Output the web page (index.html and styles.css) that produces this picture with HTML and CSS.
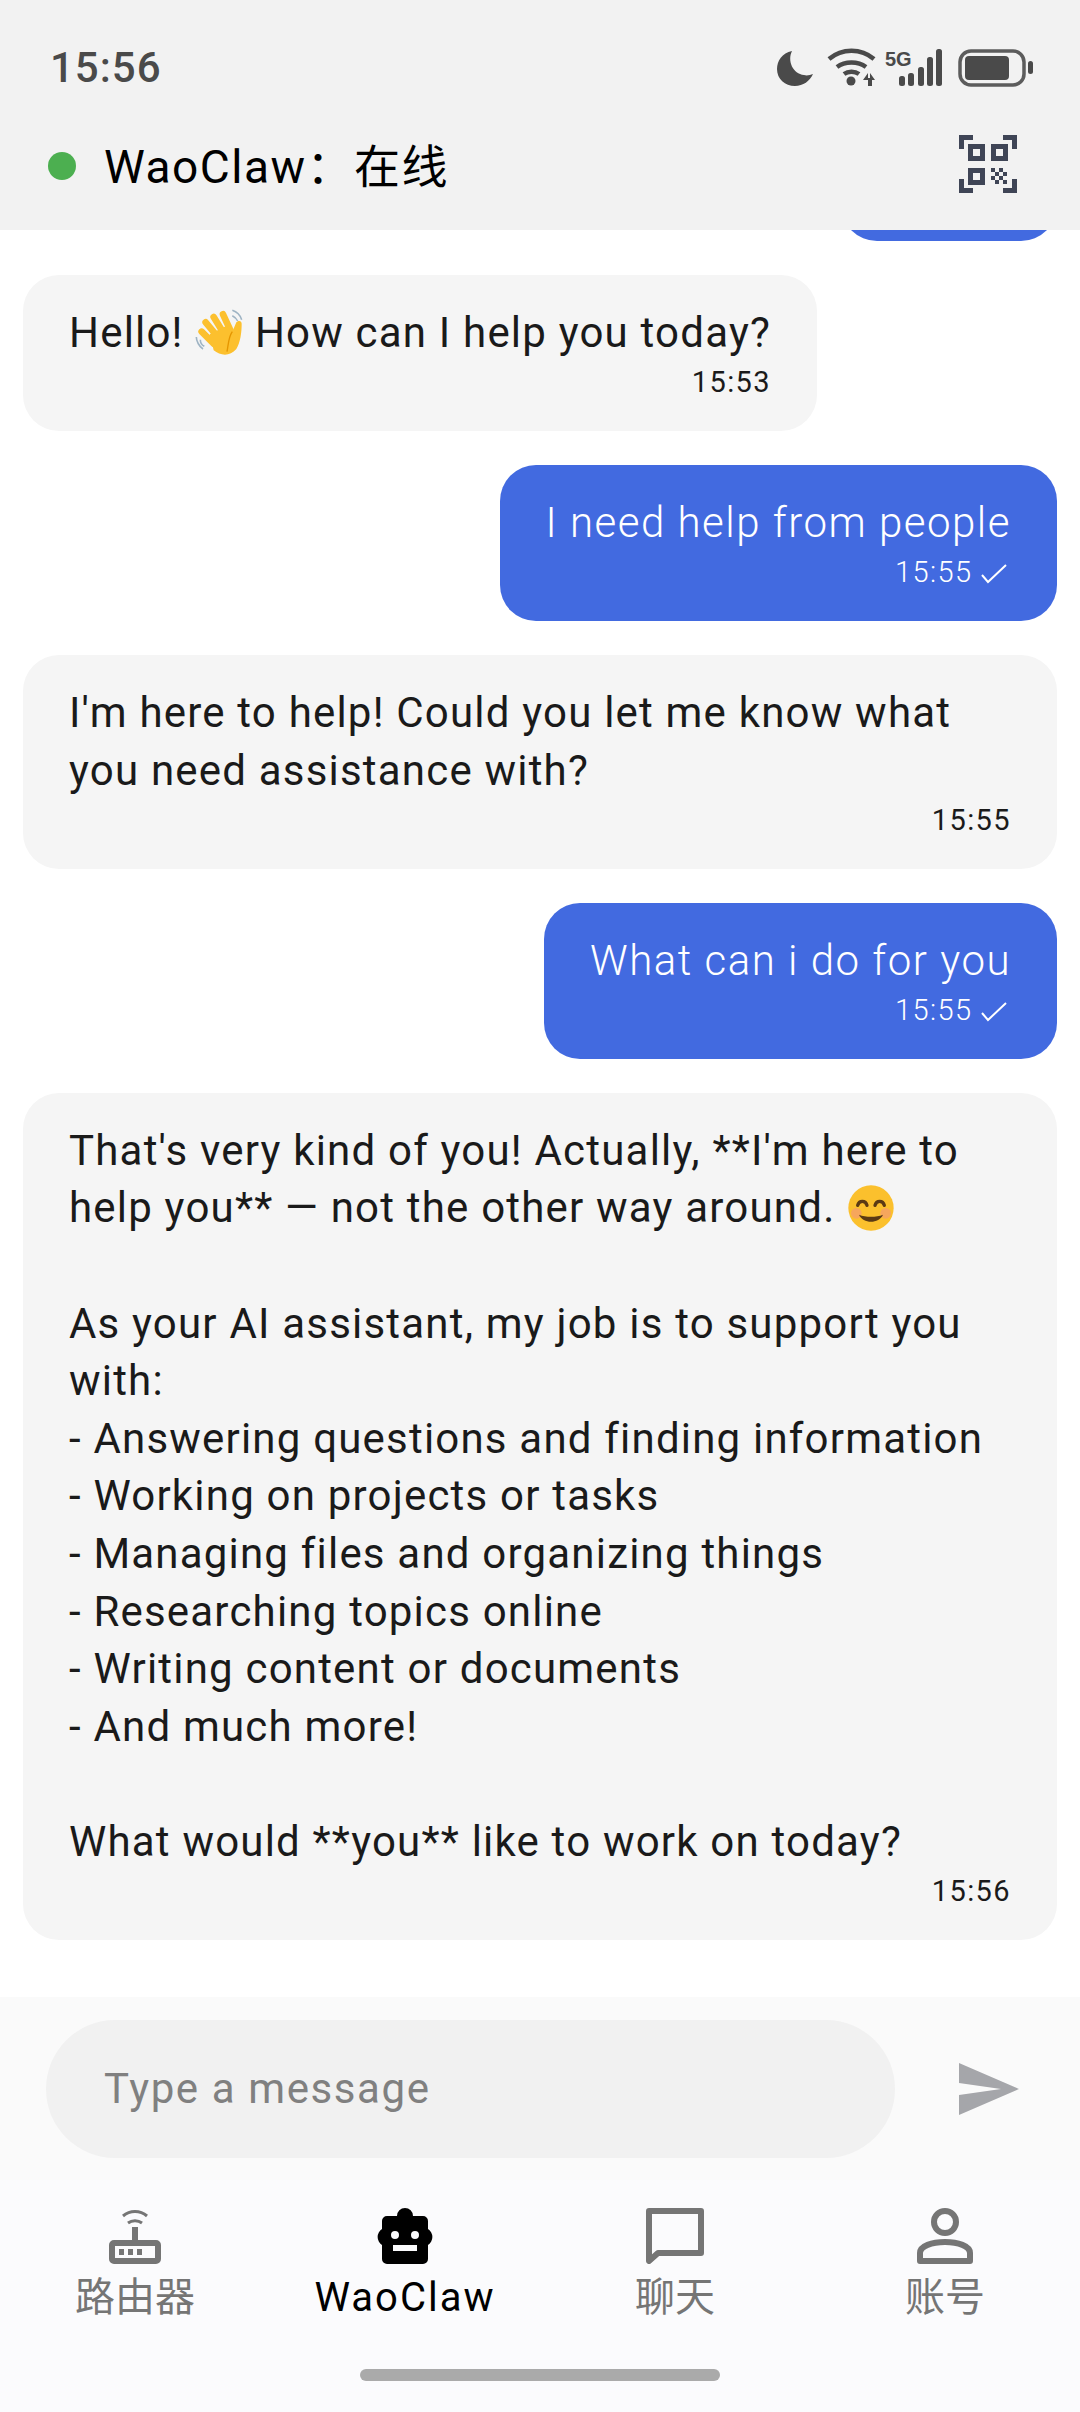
FILE: index.html
```html
<!DOCTYPE html>
<html lang="en">

<head>
    <meta charset="UTF-8">
    <meta name="viewport" content="width=device-width, initial-scale=1.0">
    <title>WaoClaw</title>
    <link rel="stylesheet" href="styles.css">
</head>

<body>
    <div class="app">
        <header class="top">
            <div class="status">
                <span class="clock">15:56</span>
                <svg class="status-icons" width="256" height="40" viewBox="0 0 256 40" fill="#4a4a4a">
                    <path d="M15 3C5 5 0 13 0 21c0 10 8 17 18 17 8 0 15-5 18-12-3 1-6 2-9 1-11-1-17-14-12-24z" />
                    <path fill="none" stroke="#4a4a4a" stroke-width="4.500" d="M52 11c13-11 32-11 45 0M60 19c8-6 21-6 29 0M67 26c4-3 11-3 15 0" />
                    <circle cx="74" cy="33" r="4.500" />
                    <path d="M91 38v-6h-5l5-7zM93 25l5 7h-5z" />
                    <path d="M91 30h2v8h-2zM93 30h2v8h-2z" />
                    <text x="108" y="18" class="five-g">5G</text>
                    <rect x="122" y="28" width="6" height="10" rx="2.500" />
                    <rect x="131" y="25" width="6" height="13" rx="2.500" />
                    <rect x="141" y="19" width="6" height="19" rx="2.500" />
                    <rect x="150" y="9" width="6" height="29" rx="2.500" />
                    <rect x="159" y="1" width="6" height="37" rx="2.500" />
                    <rect x="183" y="3" width="64" height="34" rx="11" fill="none" stroke="#5c5c5c" stroke-width="3.500" />
                    <rect x="188" y="8" width="44" height="24" rx="4" />
                    <rect x="251" y="13" width="5" height="13" rx="2.500" />
                </svg>
            </div>
            <div class="title-row">
                <span class="dot"></span>
                <h1 class="title">WaoClaw：在线</h1>
                <svg class="qr" width="58" height="58" viewBox="0 0 58 58" fill="#3f4556">
                    <path d="M0 0h14v5H5v9H0zM44 0h14v14h-5V5h-9zM0 44h5v9h9v5H0zM53 44h5v14H44v-5h9z" />
                    <path fill-rule="evenodd" d="M9 9h17v17H9zm5 5v7h7v-7zM32 9h17v17H32zm5 5v7h7v-7zM9 33h17v17H9zm5 5v7h7v-7z" />
                    <path d="M32 33h4v4h-4zM40 33h4v4h-4zM36 37h4v4h-4zM44 37h4v4h-4zM32 41h4v4h-4zM40 41h4v4h-4zM36 45h4v4h-4zM44 45h4v4h-4z" />
                </svg>
            </div>
        </header>

        <main class="chat">
            <div class="msg mine cut"></div>
            <div class="msg">
                <p>Hello! <svg class="emoji" viewBox="0 0 36 36"><g fill="none" stroke="#fcc02e" stroke-width="5" stroke-linecap="round"><path d="M5 17l9 9M8 10l10 12M14 6l8 13M21 4l6 13" /></g><path fill="#fcc02e" d="M11 19l12-6 5 4 3-7c2-2 4-1 4 1 0 7-1 14-4 19-5 6-12 5-17 1z" /><path fill="none" stroke="#e59600" stroke-width="1" d="M28 17c-3 4-3 10-4 15" /><path fill="none" stroke="#9fb4c4" stroke-width="1.200" d="M1 21c0 3 2 7 5 9M4 23c0 2 1 4 3 5M28 1c3 1 6 4 7 7M28 5c2 1 3 2 4 4" /></svg> How can I help you today?</p>
                <div class="meta">15:53</div>
            </div>
            <div class="msg mine">
                <p>I need help from people</p>
                <div class="meta">15:55 <svg class="tick" width="26" height="20" viewBox="0 0 26 20"><path fill="none" stroke="#fff" stroke-width="2" d="M1 11l6 7L25 1" /></svg></div>
            </div>
            <div class="msg">
                <p>I'm here to help! Could you let me know what you need assistance with?</p>
                <div class="meta">15:55</div>
            </div>
            <div class="msg mine">
                <p>What can i do for you</p>
                <div class="meta">15:55 <svg class="tick" width="26" height="20" viewBox="0 0 26 20"><path fill="none" stroke="#fff" stroke-width="2" d="M1 11l6 7L25 1" /></svg></div>
            </div>
            <div class="msg">
                <p>That's very kind of you! Actually, **I'm here to help you** — not the other way around. <svg class="emoji" viewBox="0 0 36 36"><circle cx="18" cy="18" r="17" fill="#fbc02d" /><circle cx="7" cy="22" r="4" fill="#f4957c" opacity=".6" /><circle cx="29" cy="22" r="4" fill="#f4957c" opacity=".6" /><path fill="none" stroke="#5b3a14" stroke-width="2.500" stroke-linecap="round" d="M8 16c1-4 6-4 7 0M21 16c1-4 6-4 7 0" /><path fill="#5b3a14" d="M9 23c5 2 13 2 18 0-3 7-15 7-18 0z" /></svg>

As your AI assistant, my job is to support you with:
- Answering questions and finding information
- Working on projects or tasks
- Managing files and organizing things
- Researching topics online
- Writing content or documents
- And much more!

What would **you** like to work on today?</p>
                <div class="meta">15:56</div>
            </div>
        </main>

        <div class="composer">
            <div class="field">Type a message</div>
            <svg class="send" width="60" height="52" viewBox="0 0 60 52"><path fill="#a5a6aa" d="M0 0l60 26L0 52V32l42-6L0 20z" /></svg>
        </div>

        <nav class="tabs">
            <div class="tab">
                <svg width="52" height="56" viewBox="0 0 52 56" fill="#757575">
                    <path fill="none" stroke="#757575" stroke-width="3" d="M24 8c7-6 17-6 24 0M29 15c4-3 10-3 14 0" transform="translate(-10 0)" />
                    <path fill-rule="evenodd" d="M23 19h6v13h18a5 5 0 0 1 5 5v14a5 5 0 0 1-5 5H5a5 5 0 0 1-5-5V37a5 5 0 0 1 5-5h18zM6 38v12h40V38z" />
                    <path d="M10 41h5v6h-5zM19 41h5v6h-5zM28 41h5v6h-5z" />
                </svg>
                <span>路由器</span>
            </div>
            <div class="tab active">
                <svg width="64" height="56" viewBox="0 0 64 56" fill="#000">
                    <path fill-rule="evenodd" d="M32 0a8 8 0 0 1 8 8h10a5 5 0 0 1 5 5v8a9.500 9.500 0 0 1 0 16v14a5 5 0 0 1-5 5H14a5 5 0 0 1-5-5V37a9.500 9.500 0 0 1 0-16v-8a5 5 0 0 1 5-5h10a8 8 0 0 1 8-8zM22 23a4 4 0 1 0 0 8 4 4 0 0 0 0-8zm20 0a4 4 0 1 0 0 8 4 4 0 0 0 0-8zM20 37v6h24v-6z" />
                </svg>
                <span>WaoClaw</span>
            </div>
            <div class="tab">
                <svg width="58" height="56" viewBox="0 0 58 56">
                    <path fill="none" stroke="#757575" stroke-width="6" stroke-linejoin="round" d="M3 3h52v42H12l-9 8z" />
                </svg>
                <span>聊天</span>
            </div>
            <div class="tab">
                <svg width="56" height="56" viewBox="0 0 56 56">
                    <circle cx="28" cy="14" r="11" fill="none" stroke="#757575" stroke-width="6" />
                    <path fill="none" stroke="#757575" stroke-width="6" stroke-linejoin="round" d="M3 53v-8c0-7 12-11 25-11s25 4 25 11v8z" />
                </svg>
                <span>账号</span>
            </div>
        </nav>
        <div class="home-bar"></div>
    </div>
</body>

</html>
```
FILE: styles.css
```css
* {
    box-sizing: border-box;
}

body {
    margin: 0;
    font-family: Roboto, "Noto Sans CJK SC", sans-serif;
    background-color: #fff;
}

.app {
    width: 1080px;
    height: 2412px;
    display: flex;
    flex-direction: column;
    overflow: hidden;
}

/* Header */
.top {
    height: 230px;
    flex: none;
    background-color: #f2f2f2;
}

.status {
    height: 130px;
    padding: 48px 47px 0 50px;
    display: flex;
    justify-content: space-between;
    align-items: flex-start;
}

.clock {
    font-size: 42px;
    line-height: 40px;
    font-weight: 500;
    color: #4a4a4a;
    letter-spacing: 1px;
}

.five-g {
    font-family: "Liberation Sans", sans-serif;
    font-size: 20px;
    font-weight: 700;
}

.title-row {
    display: flex;
    align-items: center;
    padding: 0 63px 0 48px;
}

.dot {
    width: 28px;
    height: 28px;
    border-radius: 50%;
    background-color: #4caf50;
    margin: 3px 28px 0 0;
}

.title {
    flex: 1;
    margin: 0 0 2px;
    font-size: 46px;
    font-weight: 400;
    letter-spacing: 1.5px;
    color: #000;
}

/* Messages */
.chat {
    flex: 1;
    min-height: 0;
    overflow: hidden;
    padding: 0 23px 57px;
    display: flex;
    flex-direction: column;
    justify-content: flex-end;
    align-items: flex-start;
    gap: 34px;
}

.msg {
    flex: none;
    max-width: 1034px;
    padding: 29px 46px 30px;
    border-radius: 36px;
    background-color: #f5f5f5;
    color: #1a1a1a;
}

.msg p {
    margin: 0;
    font-size: 42px;
    line-height: 57.6px;
    letter-spacing: 1.2px;
    white-space: pre-wrap;
}

.meta {
    margin-top: 2.4px;
    text-align: right;
    font-size: 29px;
    line-height: 37px;
    letter-spacing: 1.4px;
}

.msg.mine {
    align-self: flex-end;
    background-color: #426ae0;
    color: #fff;
}

.msg.mine p,
.msg.mine .meta {
    font-weight: 300;
}

.msg.mine p {
    letter-spacing: 1.5px;
}

.msg.cut {
    width: 216px;
    height: 156px;
}

.tick {
    vertical-align: -2px;
    margin-right: 4px;
}

.emoji {
    width: 48px;
    height: 48px;
    vertical-align: -10px;
}

/* Input */
.composer {
    flex: none;
    height: 183px;
    padding: 23px 0 0 46px;
    background-color: #fafafa;
    display: flex;
    align-items: flex-start;
}

.field {
    width: 849px;
    height: 138px;
    padding-left: 58px;
    border-radius: 69px;
    background-color: #f1f1f1;
    color: #808080;
    font-size: 42px;
    line-height: 138px;
    letter-spacing: 1.6px;
}

.send {
    margin: 43px 0 0 64px;
}

/* Bottom nav */
.tabs {
    flex: none;
    height: 160px;
    background-color: #fbfbfd;
    display: grid;
    grid-template-columns: repeat(4, 270px);
}

.tab {
    display: flex;
    flex-direction: column;
    align-items: center;
    padding-top: 28px;
    color: #757575;
    font-size: 40px;
    line-height: 50px;
}

.tab svg {
    margin-bottom: 9px;
}

.tab.active {
    color: #000;
    letter-spacing: 2px;
}

.home-bar {
    flex: none;
    height: 72px;
    background-color: #fbfbfd;
    position: relative;
}

.home-bar::after {
    content: "";
    position: absolute;
    left: 360px;
    top: 29px;
    width: 360px;
    height: 12px;
    border-radius: 6px;
    background-color: #aaa;
}
```
